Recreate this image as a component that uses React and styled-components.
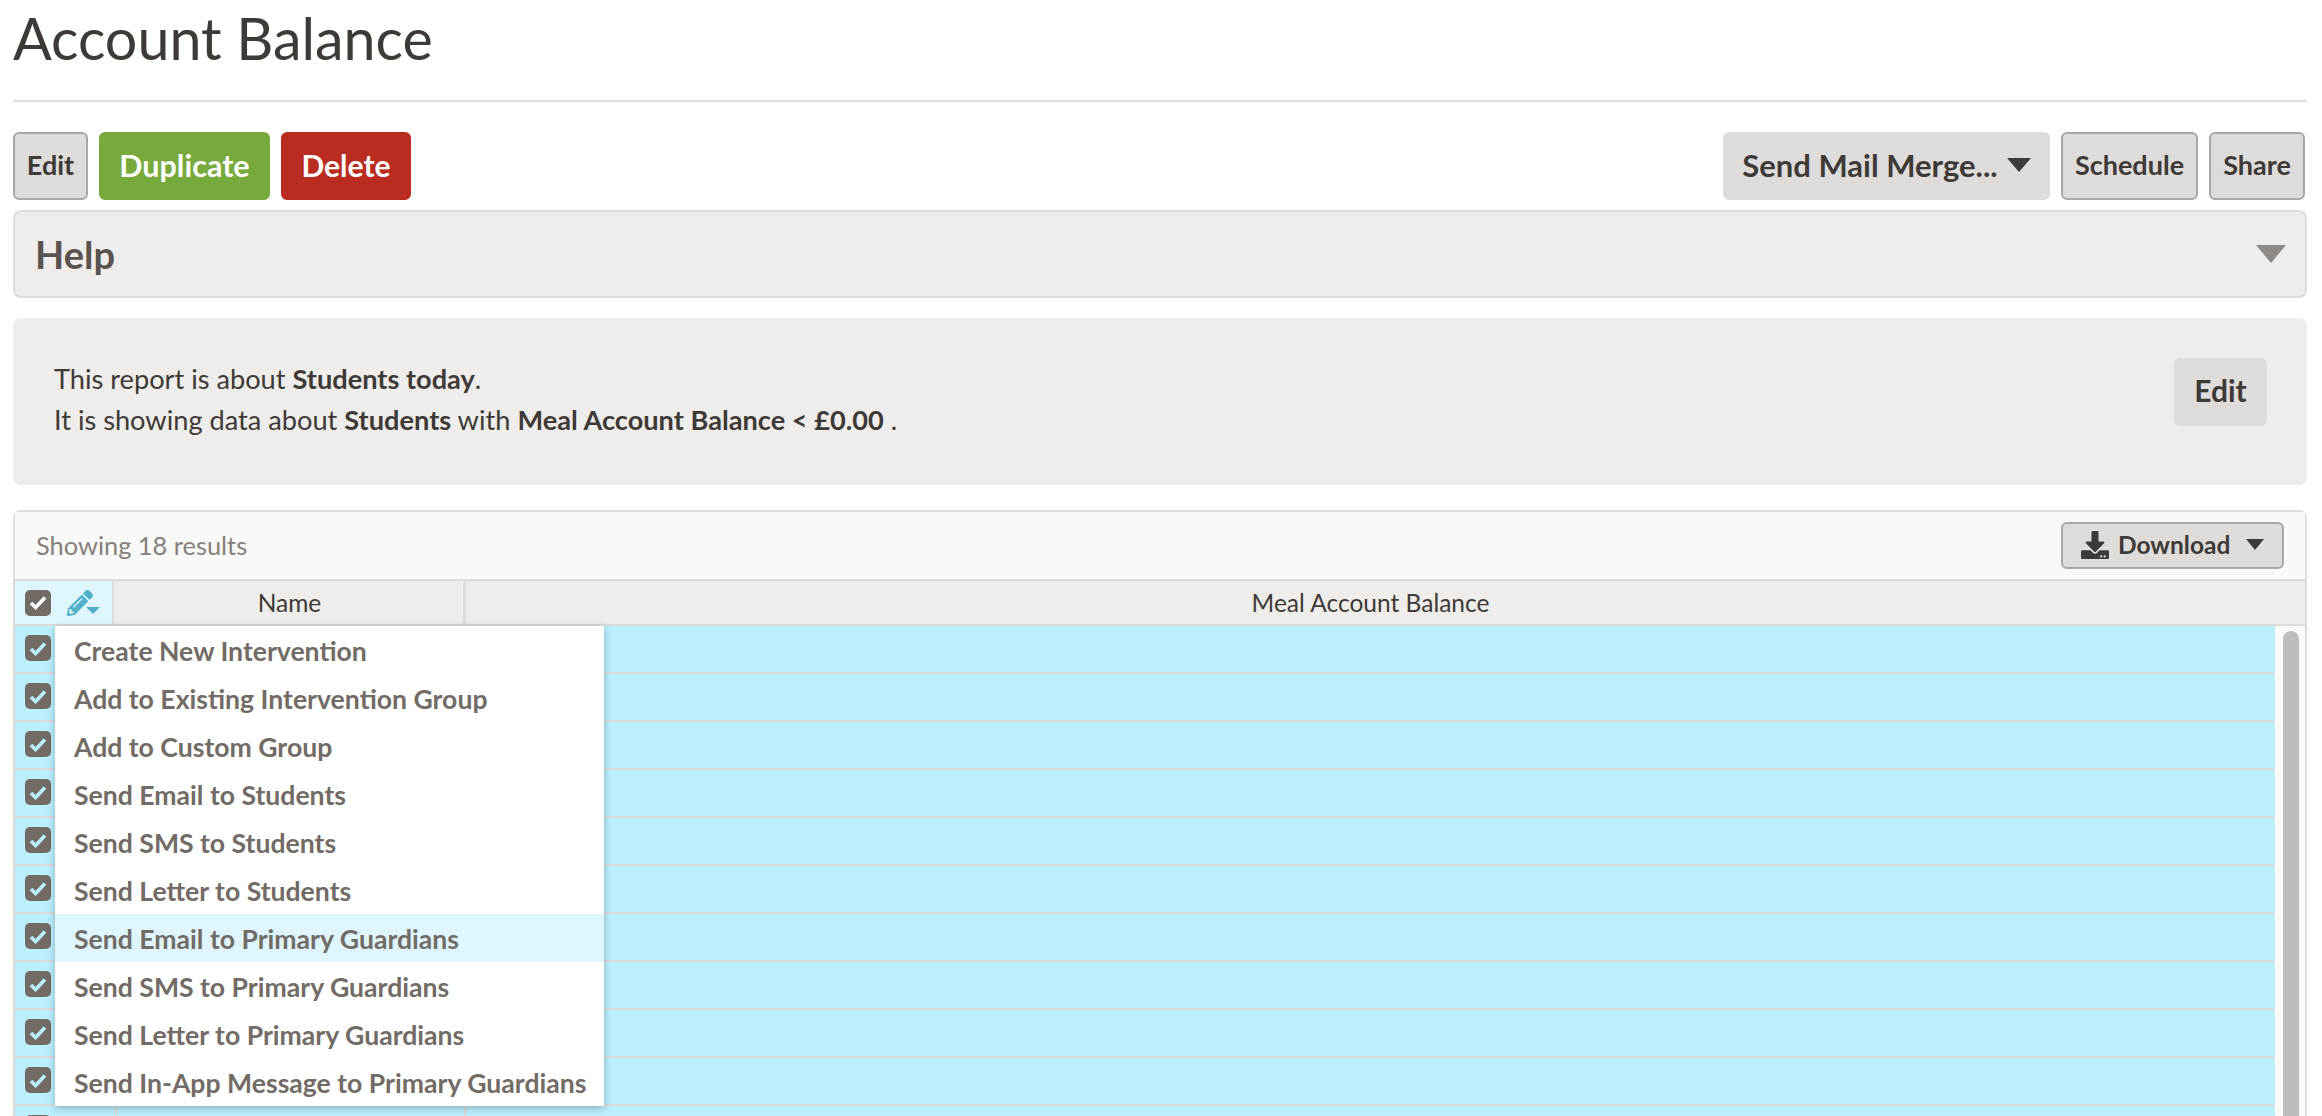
import React from "react";
import styled, { createGlobalStyle } from "styled-components";
import { FaPencilAlt, FaDownload } from "react-icons/fa";

const Global = createGlobalStyle`
  html, body { margin: 0; padding: 0; height: 100%; overflow: hidden; background: #fff; }
  body { font-family: "Lato", "Noto Sans", "Liberation Sans", sans-serif; color: #3e3a37; }
  #root { height: 100vh; overflow: hidden; }
`;

const Page = styled.div`
  padding: 0 15px 0 13px;
  display: flex;
  flex-direction: column;
`;
const Title = styled.h1`
  margin: 0;
  height: 100px;
  box-sizing: border-box;
  font-size: 57.4px;
  line-height: 76px;
  font-weight: 400;
  color: #3e3a37;
`;
const Rule = styled.hr`
  margin: 0;
  height: 2px;
  border: 0;
  background: #dddcdb;
`;
const Toolbar = styled.div`
  margin-top: 30px;
  padding-right: 2px;
  display: flex;
  align-items: flex-start;
  justify-content: space-between;
`;
const ButtonGroup = styled.div`
  display: flex;
  gap: 11px;
`;
const tones = {
  plain: "background:#dddcdb;color:#3e3a37;border:2px solid #aaa6a3;",
  flat: "background:#dddcdb;color:#3e3a37;border:2px solid #dddcdb;",
  green: "background:#78a93d;color:#fff;border:2px solid #78a93d;",
  red: "background:#ba2c20;color:#fff;border:2px solid #ba2c20;",
};
const Button = styled.button`
  box-sizing: border-box;
  height: 68px;
  width: ${(p) => p.$w}px;
  padding: 0 0 3px;
  display: flex;
  align-items: center;
  justify-content: center;
  gap: 9px;
  border-radius: 6px;
  font-family: inherit;
  font-weight: 700;
  font-size: ${(p) => p.$size || 27}px;
  ${(p) => tones[p.$tone || "plain"]}
`;
const Caret = styled.span`
  display: inline-block;
  flex: none;
  width: 0;
  height: 0;
  border-left: ${(p) => p.$s}px solid transparent;
  border-right: ${(p) => p.$s}px solid transparent;
  border-top: ${(p) => Math.round(p.$s * 1.17)}px solid ${(p) => p.$c || "#3e3a37"};
`;
const HelpPanel = styled.div`
  box-sizing: border-box;
  margin-top: 10px;
  height: 88px;
  padding: 0 19px 0 20px;
  display: flex;
  align-items: center;
  justify-content: space-between;
  background: #eeedeb;
  border: 2px solid #dddcdb;
  border-radius: 8px;
`;
const HelpTitle = styled.span`
  font-size: 38px;
  font-weight: 700;
  color: #5a5450;
`;
const InfoPanel = styled.div`
  box-sizing: border-box;
  margin-top: 20px;
  height: 167px;
  padding: 0 40px 6px 41px;
  display: flex;
  align-items: center;
  justify-content: space-between;
  background: #eeedeb;
  border-radius: 8px;
  & > button { margin-bottom: 14px; }
`;
const InfoText = styled.p`
  margin: 0;
  font-size: 27.2px;
  line-height: 41px;
  color: #3e3a37;
`;
const Results = styled.div`
  margin-top: 25px;
  border: 2px solid #dddcdb;
  border-bottom: 0;
  border-radius: 8px 8px 0 0;
`;
const ResultsBar = styled.div`
  box-sizing: border-box;
  height: 69px;
  padding: 0 21px 0 21px;
  display: flex;
  align-items: center;
  justify-content: space-between;
  background: #f9f9f9;
  border-bottom: 2px solid #dddcdb;
`;
const Count = styled.span`
  font-size: 25.4px;
  color: #857f7b;
  padding-bottom: 2px;
`;
const DownloadButton = styled.button`
  box-sizing: border-box;
  width: 223px;
  height: 47px;
  padding: 0 18px 2px 18px;
  display: flex;
  align-items: center;
  gap: 9px;
  background: #dddcdb;
  border: 2px solid #aaa6a3;
  border-radius: 6px;
  font-family: inherit;
  font-size: 24.5px;
  font-weight: 700;
  color: #3e3a37;
  & > span:last-child { margin-left: auto; }
`;
const Grid = styled.div`
  position: relative;
`;
const HeaderRow = styled.div`
  display: flex;
  height: 43px;
  background: #eeedeb;
  border-bottom: 2px solid #dddcdb;
  box-sizing: content-box;
`;
const ActionCell = styled.div`
  box-sizing: border-box;
  width: 99px;
  padding-left: 10px;
  display: flex;
  align-items: center;
  gap: 16px;
  background: #dff6fe;
  border-right: 2px solid #dddcdb;
`;
const HeadCell = styled.div`
  box-sizing: border-box;
  width: ${(p) => (p.$w ? p.$w + "px" : "auto")};
  ${(p) => (p.$w ? "" : "flex: 1;")}
  margin-right: ${(p) => p.$mr || 0}px;
  padding-left: ${(p) => p.$pl || 0}px;
  display: flex;
  align-items: center;
  justify-content: center;
  font-size: 24.5px;
  color: #3e3a37;
  border-right: ${(p) => (p.$divider ? "3px solid #dddcdb" : "0")};
`;
const EditTool = styled.span`
  display: flex;
  align-items: flex-end;
  color: #4fb0c8;
  font-size: 26px;
  line-height: 0;
`;
const ToolCaret = styled.span`
  display: inline-block;
  width: 0;
  height: 0;
  margin-left: -7px;
  margin-bottom: 2px;
  border-left: 7px solid transparent;
  border-right: 7px solid transparent;
  border-top: 7px solid #4fb0c8;
`;
const Check = styled.span`
  box-sizing: border-box;
  flex: none;
  width: 26px;
  height: 26px;
  border-radius: 5px;
  background: #726b66;
  display: flex;
  align-items: center;
  justify-content: center;
  color: ${(p) => p.$mark};
`;
const Body = styled.div`
  display: flex;
`;
const Rows = styled.div`
  flex: 1;
  min-width: 0;
`;
const Row = styled.div`
  box-sizing: border-box;
  height: 48px;
  display: flex;
  background: #bbf0ff;
  border-bottom: 2px solid #dddcdb;
`;
const RowAction = styled.div`
  box-sizing: border-box;
  width: 102px;
  padding: 9px 0 0 10px;
  border-right: 2px solid #dddcdb;
`;
const RowName = styled.div`
  box-sizing: border-box;
  width: 349px;
  border-right: 2px solid #dddcdb;
`;
const ScrollTrack = styled.div`
  flex: none;
  width: 30px;
  background: #fafafa;
  padding: 5px 6px 0 8px;
  box-sizing: border-box;
`;
const ScrollThumb = styled.div`
  width: 16px;
  height: 600px;
  border-radius: 8px;
  background: #bdbdbd;
`;
const Menu = styled.ul`
  position: absolute;
  left: 40px;
  top: 0;
  width: 549px;
  margin: 0;
  padding: 0;
  list-style: none;
  background: #fff;
  box-shadow: 0 2px 8px rgba(0, 0, 0, 0.28);
  z-index: 2;
`;
const MenuItem = styled.li`
  box-sizing: border-box;
  height: 48px;
  padding: 2px 0 0 19px;
  display: flex;
  align-items: center;
  font-size: 26.6px;
  font-weight: 700;
  color: #726b66;
  white-space: nowrap;
  background: ${(p) => (p.$active ? "#dff6fe" : "#fff")};
`;

const CheckBox = ({ mark }) => (
  <Check $mark={mark}>
    <svg width="18" height="15" viewBox="0 0 18 15" aria-hidden="true">
      <path d="M2 8l4.6 4.5L16 2.5" fill="none" stroke="currentColor" strokeWidth="3.6" />
    </svg>
  </Check>
);

const menuItems = [
  "Create New Intervention",
  "Add to Existing Intervention Group",
  "Add to Custom Group",
  "Send Email to Students",
  "Send SMS to Students",
  "Send Letter to Students",
  "Send Email to Primary Guardians",
  "Send SMS to Primary Guardians",
  "Send Letter to Primary Guardians",
  "Send In-App Message to Primary Guardians",
];
const rows = Array.from({ length: 11 }, (_, i) => i);

export default function App() {
  return (
    <>
      <Global />
      <Page>
        <Title>Account Balance</Title>
        <Rule />
        <Toolbar>
          <ButtonGroup>
            <Button $w={75}>Edit</Button>
            <Button $w={171} $tone="green" $size={30.5}>Duplicate</Button>
            <Button $w={130} $tone="red" $size={30}>Delete</Button>
          </ButtonGroup>
          <ButtonGroup>
            <Button $w={327} $tone="flat" $size={31}>
              Send Mail Merge... <Caret $s={12} />
            </Button>
            <Button $w={137}>Schedule</Button>
            <Button $w={96}>Share</Button>
          </ButtonGroup>
        </Toolbar>
        <HelpPanel>
          <HelpTitle>Help</HelpTitle>
          <Caret $s={15} $c="#8f8a86" />
        </HelpPanel>
        <InfoPanel>
          <InfoText>
            This report is about <b>Students today</b>.<br />
            It is showing data about <b>Students</b> with <b>Meal Account Balance &lt; £0.00</b> .
          </InfoText>
          <Button $w={93} $tone="flat" $size={30}>Edit</Button>
        </InfoPanel>
        <Results>
          <ResultsBar>
            <Count>Showing 18 results</Count>
            <DownloadButton>
              <FaDownload size={28} />
              Download
              <Caret $s={9} />
            </DownloadButton>
          </ResultsBar>
          <HeaderRow>
            <ActionCell>
              <CheckBox mark="#fff" />
              <EditTool>
                <FaPencilAlt />
                <ToolCaret />
              </EditTool>
            </ActionCell>
            <HeadCell $w={352} $pl={2} $divider>Name</HeadCell>
            <HeadCell $mr={30}>Meal Account Balance</HeadCell>
          </HeaderRow>
          <Grid>
            <Body>
              <Rows>
                {rows.map((r) => (
                  <Row key={r}>
                    <RowAction>
                      <CheckBox mark="#bbf0ff" />
                    </RowAction>
                    <RowName />
                  </Row>
                ))}
              </Rows>
              <ScrollTrack>
                <ScrollThumb />
              </ScrollTrack>
            </Body>
            <Menu>
              {menuItems.map((m, i) => (
                <MenuItem key={m} $active={i === 6}>{m}</MenuItem>
              ))}
            </Menu>
          </Grid>
        </Results>
      </Page>
    </>
  );
}
